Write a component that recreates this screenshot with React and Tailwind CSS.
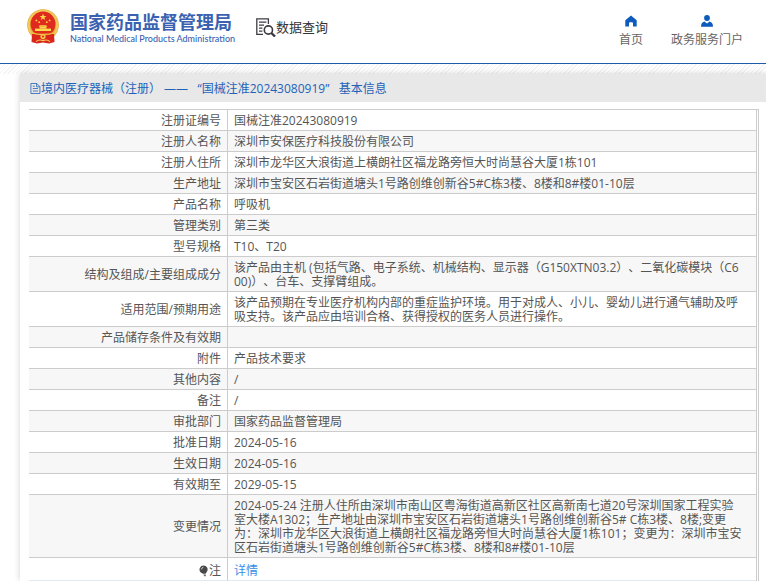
import React from "react";

// --- Static data ---
const NAV_LINKS = [
  { label: "首页", icon: HomeIcon },
  { label: "政务服务门户", icon: UserIcon },
];

const ROWS = [
  { label: "注册证编号", value: "国械注准20243080919" },
  { label: "注册人名称", value: "深圳市安保医疗科技股份有限公司" },
  {
    label: "注册人住所",
    value: "深圳市龙华区大浪街道上横朗社区福龙路旁恒大时尚慧谷大厦1栋101",
  },
  {
    label: "生产地址",
    value: "深圳市宝安区石岩街道塘头1号路创维创新谷5#C栋3楼、8楼和8#楼01-10层",
  },
  { label: "产品名称", value: "呼吸机" },
  { label: "管理类别", value: "第三类" },
  { label: "型号规格", value: "T10、T20" },
  {
    label: "结构及组成/主要组成成分",
    value:
      "该产品由主机 (包括气路、电子系统、机械结构、显示器（G150XTN03.2）、二氧化碳模块（C6\n00)）、台车、支撑臂组成。",
  },
  {
    label: "适用范围/预期用途",
    value:
      "该产品预期在专业医疗机构内部的重症监护环境。用于对成人、小儿、婴幼儿进行通气辅助及呼\n吸支持。该产品应由培训合格、获得授权的医务人员进行操作。",
  },
  { label: "产品储存条件及有效期", value: "" },
  { label: "附件", value: "产品技术要求" },
  { label: "其他内容", value: "/" },
  { label: "备注", value: "/" },
  { label: "审批部门", value: "国家药品监督管理局" },
  { label: "批准日期", value: "2024-05-16" },
  { label: "生效日期", value: "2024-05-16" },
  { label: "有效期至", value: "2029-05-15" },
  {
    label: "变更情况",
    value:
      "2024-05-24 注册人住所由深圳市南山区粤海街道高新区社区高新南七道20号深圳国家工程实验\n室大楼A1302；生产地址由深圳市宝安区石岩街道塘头1号路创维创新谷5# C栋3楼、8楼;变更\n为：深圳市龙华区大浪街道上横朗社区福龙路旁恒大时尚慧谷大厦1栋101；变更为：深圳市宝安\n区石岩街道塘头1号路创维创新谷5#C栋3楼、8楼和8#楼01-10层",
  },
];

function Emblem() {
  return (
    <svg viewBox="0 0 32 35" className="h-[35px] w-8 shrink-0" aria-hidden="true">
      <circle cx="16" cy="16" r="15.8" fill="#e3a93a" />
      <circle cx="16" cy="16" r="14.2" fill="none" stroke="#f3c95c" strokeWidth="2" />
      <path d="M5 25 L27 25 L27.5 33 L22 34.6 L16 33.4 L10 34.6 L4.5 33Z" fill="#d9251c" />
      <circle cx="16" cy="15" r="12.4" fill="#e02a1e" />
      <path d="M16 4.4l.9 2.5h2.6l-2.1 1.6.8 2.6-2.2-1.6-2.2 1.6.8-2.6-2.1-1.6h2.6z" fill="#fbd94d" />
      <g fill="#fbd94d">
        <circle cx="9.4" cy="11.4" r=".9" />
        <circle cx="12.2" cy="13.2" r=".9" />
        <circle cx="19.8" cy="13.2" r=".9" />
        <circle cx="22.6" cy="11.4" r=".9" />
        <path d="M11.6 17.8 L12.8 16.2 H19.2 L20.4 17.8Z" />
        <path d="M12.6 17.8H19.4V19.6H12.6Z" />
        <path d="M8 19.6H24V22H8Z" />
      </g>
      <path d="M4 23.6 Q16 27.4 28 23.6" fill="none" stroke="#f0b93e" strokeWidth="1.4" />
      <circle cx="16" cy="27.6" r="2.6" fill="#f3c44a" />
      <circle cx="16" cy="27.6" r="1" fill="#d9251c" />
      <path d="M9 32.6 Q12 30 16 31.6 Q20 30 23 32.6" fill="none" stroke="#f6d05a" strokeWidth="1.2" />
    </svg>
  );
}

function SearchDocIcon() {
  return (
    <svg viewBox="0 0 20 20" className="h-5 w-5 shrink-0" fill="none" stroke="#3c3c44" aria-hidden="true">
      <path d="M7 17.4H.8V1.8H12.4V7" strokeWidth="1.3" />
      <path d="M3 5.2H10.4M3 8.2H8M3 11.2H6.4M3 14.2H6.4" strokeWidth="1.2" />
      <circle cx="12.4" cy="13" r="4.1" strokeWidth="1.6" />
      <path d="M15.4 16L19 19.6" strokeWidth="2.4" />
    </svg>
  );
}

function HomeIcon() {
  return (
    <svg viewBox="0 0 12 12" className="h-3 w-3" fill="#0d5bbd" aria-hidden="true">
      <path d="M6 .4L.3 5.2V11.6H4V8.2Q4 7.2 5 7.2H7Q8 7.2 8 8.2V11.6H11.7V5.2Z" />
    </svg>
  );
}

function UserIcon() {
  return (
    <svg viewBox="0 0 12 12" className="h-3 w-3" fill="#0d5bbd" aria-hidden="true">
      <circle cx="6" cy="3" r="2.9" />
      <path d="M0 11.8Q0 7.4 3.4 6.6L6 8.6L8.6 6.6Q12 7.4 12 11.8Z" />
    </svg>
  );
}

function DocIcon() {
  return (
    <svg viewBox="0 0 11 11" className="h-[11px] w-[11px] shrink-0" fill="none" stroke="#1f62b8" strokeWidth=".8" aria-hidden="true">
      <path d="M.9 .5H6.8L9.9 3.6V10.5H.9Z" />
      <path d="M6.6 .6V3.8H9.8M2.8 5.5H8M2.8 8H8M2.8 3.2H4.8" />
    </svg>
  );
}

function BulbIcon() {
  return (
    <svg viewBox="0 0 10 12" className="h-3 w-[10px]" aria-hidden="true">
      <path d="M4.6 .5A4 4 0 0 1 8 6.6L6.6 8.8H4L1.8 7.4A4 4 0 0 1 4.6 .5Z" fill="#484848" />
      <path d="M4.4 9.4H6.8V11.2H5.2Z" fill="#666" />
      <path d="M2.4 4.4Q2.6 2.6 4.4 2.2" fill="none" stroke="#ddd" strokeWidth=".9" />
    </svg>
  );
}

const Header = () => (
  <header className="flex h-16 items-start justify-between border-b border-[#1c5ca8] bg-white pr-[23px] pl-[27px]">
    <div className="flex items-start">
      <a href="#" className="flex items-start gap-[11px] pt-[9px]">
        <Emblem />
        <span className="flex w-40 flex-col pt-px whitespace-nowrap text-[#3a62b0]">
          <span className="text-[18px] leading-6 font-bold">国家药品监督管理局</span>
          <span className="font-[Lato,sans-serif] text-[9px] leading-[10px] font-medium">
            National Medical Products Administration
          </span>
        </span>
      </a>
      <a href="#" className="ml-[26px] flex items-center pt-[17px] text-[13px] leading-5 text-[#333]">
        <SearchDocIcon />
        数据查询
      </a>
    </div>
    <nav className="flex gap-7 pt-[15px]">
      {NAV_LINKS.map(({ label, icon: Icon }) => (
        <a key={label} href="#" className="flex flex-col items-center gap-[5px] text-xs leading-4 text-[#666]">
          <Icon />
          {label}
        </a>
      ))}
    </nav>
  </header>
);

const cellLine = "border-b border-[#ccc]";

const App = () => {
  return (
    <div className="min-h-screen bg-white font-['Open_Sans','Noto_Sans_CJK_SC',sans-serif] text-xs text-[#555] [text-spacing-trim:space-all]">
      <Header />
      {/* hatched strip under the header */}
      <div className="h-[10px] bg-[repeating-linear-gradient(135deg,#f3f3f3_0px,#f3f3f3_1px,#ffffff_1px,#ffffff_3px)]" />

      <main className="ml-5 bg-white shadow-[0_0_6px_rgba(0,0,0,0.18)]">
        <h1 className="flex h-7 items-center bg-[#e8e8e8] pt-px pl-[10px] text-xs whitespace-pre text-[#1f62b8]">
          <DocIcon />
          境内医疗器械（注册） ——   “国械注准20243080919”   基本信息
        </h1>

        <div className="pt-[7px] pr-[7px] pl-[9px]">
          <div className="border-t border-r-[3px] border-t-[#ccc] border-r-[#ccc] [border-right-style:double]">
            <table className="w-full table-fixed border-separate border-spacing-0 leading-[14px]">
              <colgroup>
                <col className="w-[199px]" />
                <col />
              </colgroup>
              <tbody>
                {ROWS.map((row) => (
                  <tr key={row.label} className="even:bg-[#f7f7f7]">
                    <th
                      scope="row"
                      className={`${cellLine} h-[21px] border-r px-[6px] pt-1 pb-[2px] text-right font-normal`}
                    >
                      {row.label}
                    </th>
                    <td className={`${cellLine} px-[6px] pt-1 pb-[2px] whitespace-pre-line`}>
                      {row.value}
                    </td>
                  </tr>
                ))}
                <tr>
                  <th
                    scope="row"
                    className="h-[23px] border-r border-b border-r-[#ccc] border-b-[#e3e9f0] px-[6px] pt-1 text-right font-normal"
                  >
                    <span className="flex items-center justify-end">
                      <BulbIcon />注
                    </span>
                  </th>
                  <td className="border-b border-[#e3e9f0] px-[6px] pt-1">
                    <a href="#" className="text-[#3a8ee6]">
                      详情
                    </a>
                  </td>
                </tr>
              </tbody>
            </table>
          </div>
        </div>
      </main>
    </div>
  );
};

export default App;
